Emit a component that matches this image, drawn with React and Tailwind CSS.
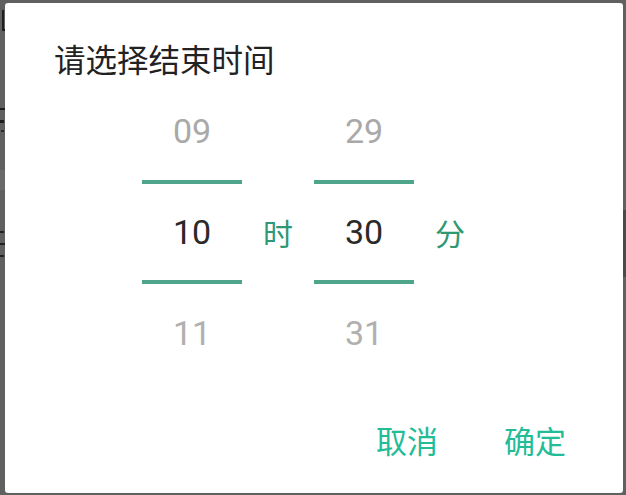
import React from "react";

const cjk = { fontFamily: '"Noto Sans CJK SC", "Noto Sans", sans-serif' };
const num = { fontFamily: 'Roboto, "Noto Sans", sans-serif' };

function Column({ prev, cur, next }) {
  return (
    <div className="flex flex-col w-[100px]" style={num}>
      <div className="h-[98px] flex items-center justify-center text-[34px] leading-none text-[#a9a9a9]">{prev}</div>
      <div className="h-[4px] bg-[#4ea58a]" />
      <div className="h-[96px] flex items-center justify-center text-[34px] leading-none text-[#2a2a2a]">{cur}</div>
      <div className="h-[4px] bg-[#4ea58a]" />
      <div className="h-[98px] flex items-center justify-center text-[34px] leading-none text-[#b0b0b0]">{next}</div>
    </div>
  );
}

function Label({ children }) {
  return (
    <div className="w-[72px] flex flex-col">
      <div className="h-[102px]" />
      <div className="h-[96px] flex items-center justify-center text-[30px] leading-none text-[#2e9873]" style={cjk}>
        {children}
      </div>
    </div>
  );
}

export default function App() {
  return (
    <div className="relative w-[626px] h-[495px] bg-[#606060] overflow-hidden">
      {/* fragments of the page behind the dialog */}
      <div className="absolute left-0 top-[10px] w-[5px] h-[22px] bg-[#606060]">
        <div className="absolute left-[2px] top-0 w-[2px] h-[20px] bg-[#1e1e1e]" />
        <div className="absolute left-[2px] top-[19px] w-[3px] h-[2px] bg-[#1e1e1e]" />
      </div>
      <div className="absolute left-0 top-[108px] w-[5px] h-[2px] bg-[#1e1e1e]" />
      <div className="absolute left-0 top-[120px] w-[4px] h-[3px] bg-[#1e1e1e]" />
      <div className="absolute left-[1px] top-[130px] w-[3px] h-[2px] bg-[#2a2a2a]" />
      <div className="absolute left-0 top-[170px] w-[5px] h-[20px] bg-[#6a6a6a]" />
      <div className="absolute left-0 top-[231px] w-[4px] h-[2px] bg-[#222]" />
      <div className="absolute left-0 top-[243px] w-[5px] h-[2px] bg-[#222]" />
      <div className="absolute left-0 top-[255px] w-[4px] h-[2px] bg-[#222]" />
      <div className="absolute right-0 top-[210px] w-[3px] h-[67px] bg-[#4a4a4a]" />

      {/* dialog */}
      <div className="absolute left-[5px] top-[3px] w-[618px] h-[490px] bg-white rounded-[3px] flex flex-col">
        <div className="pt-[40px] pl-[49px] text-[31.5px] leading-none h-[71px] text-[#222222]" style={cjk}>
          请选择结束时间
        </div>
        <div className="mt-[8px] flex justify-center">
          <div className="flex">
            <Column prev="09" cur="10" next="11" />
            <Label>时</Label>
            <Column prev="29" cur="30" next="31" />
            <Label>分</Label>
          </div>
        </div>
        <div className="mt-[42px] flex justify-end gap-[66px] pr-[57px] text-[31px] leading-none text-[#22bc97]" style={cjk}>
          <span>取消</span>
          <span>确定</span>
        </div>
      </div>
    </div>
  );
}
